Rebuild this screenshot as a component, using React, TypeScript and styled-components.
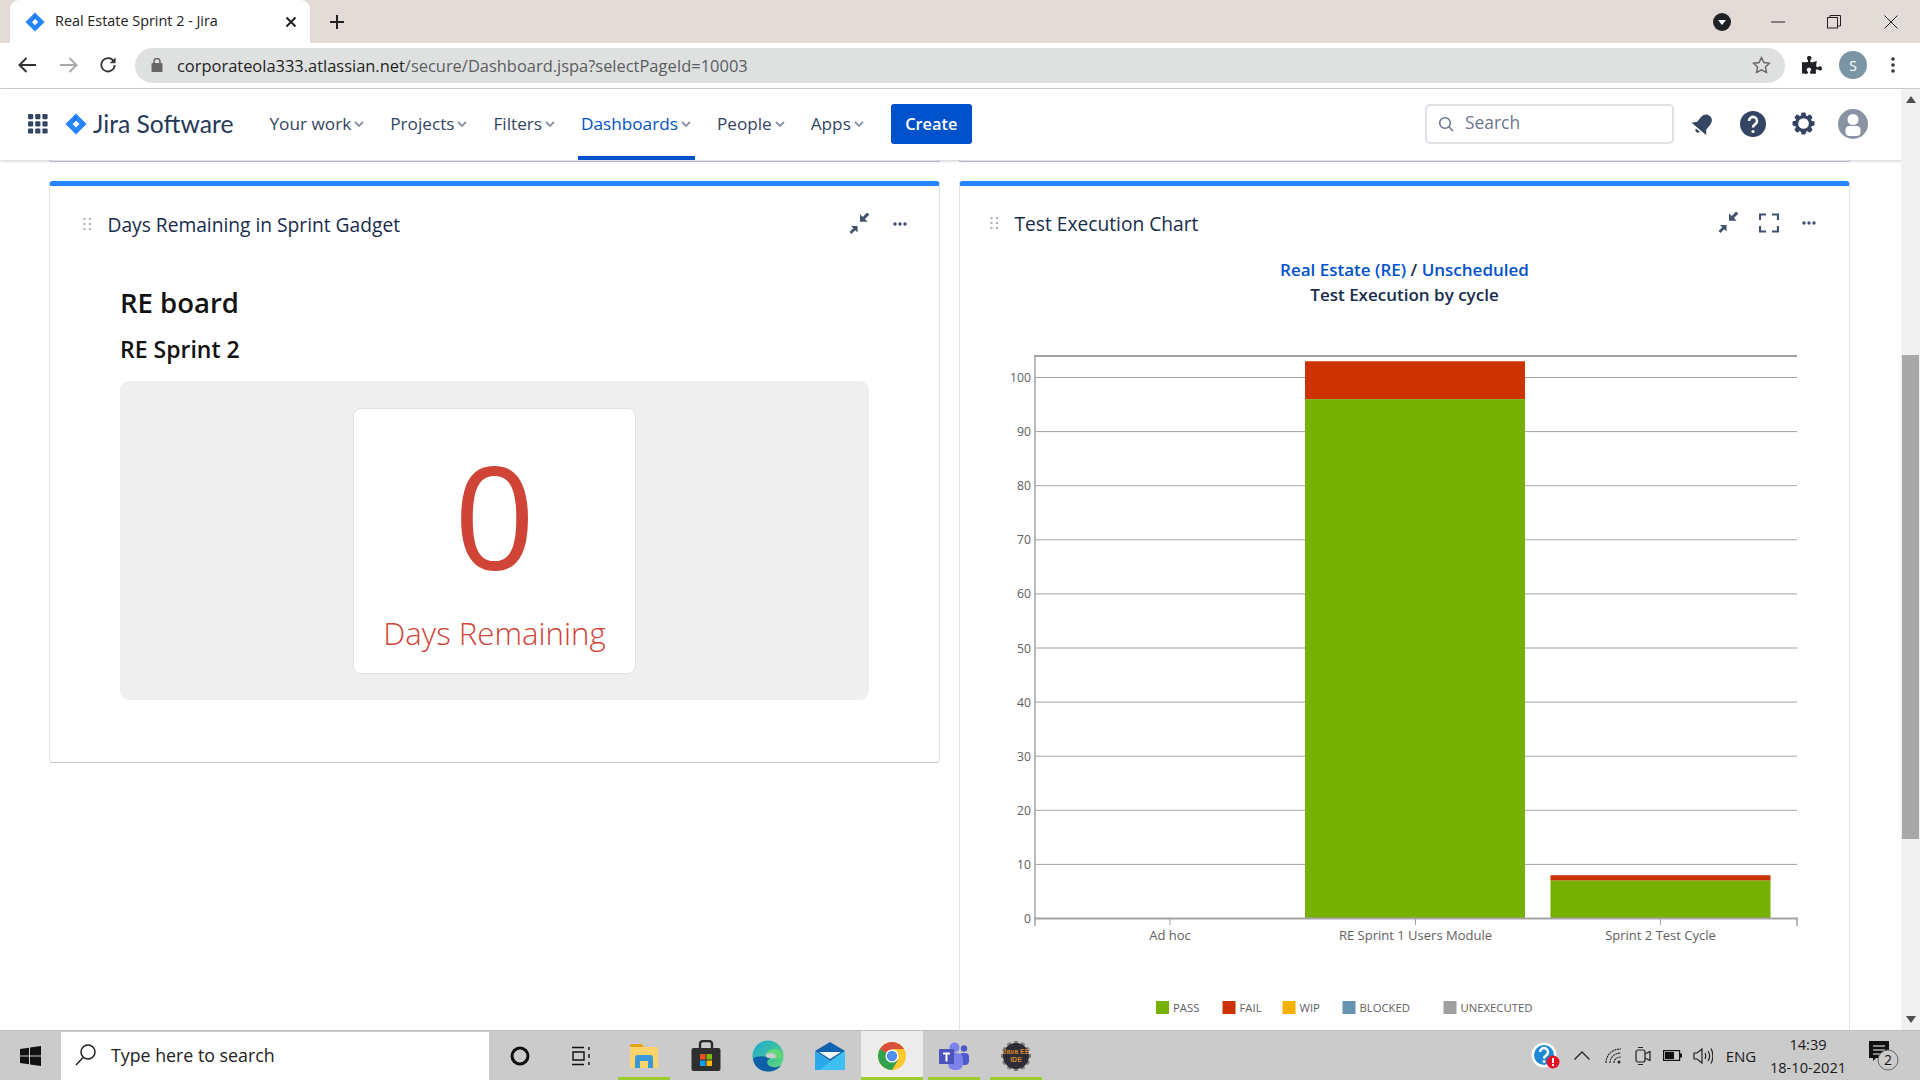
import React from "react";
import styled, { createGlobalStyle } from "styled-components";
import { FaPuzzlePiece } from "react-icons/fa";

const Global = createGlobalStyle`
  html, body {
    margin: 0;
    height: 100%;
    overflow: hidden;
    background: white;
    font-family: "Open Sans", "Noto Sans", sans-serif;
  }
  * { box-sizing: border-box; }
`;

const Screen = styled.div`
  width: 1920px;
  height: 1080px;
  display: flex;
  flex-direction: column;
  overflow: hidden;
`;

/* browser chrome */
const TabStrip = styled.div`
  height: 43px;
  flex: none;
  background: #e3dbd8;
  display: flex;
  align-items: flex-end;
  padding-left: 10px;
`;

const Tab = styled.div`
  width: 300px;
  height: 43px;
  background: white;
  border-radius: 9px 9px 0 0;
  display: flex;
  align-items: center;
  padding: 0 13px 0 15px;
  gap: 10px;
`;

const TabTitle = styled.span`
  flex: 1;
  font-size: 14.4px;
  margin-top: -2px;
  color: #222;
  white-space: nowrap;
`;

const NewTab = styled.div`
  width: 54px;
  height: 43px;
  display: flex;
  align-items: center;
  justify-content: center;
`;

const WindowControls = styled.div`
  margin-left: auto;
  height: 43px;
  display: flex;
  align-items: center;
`;

const WindowButton = styled.div<{ $w: number }>`
  width: ${(p) => p.$w}px;
  display: flex;
  justify-content: center;
`;

const Toolbar = styled.div`
  height: 46px;
  flex: none;
  background: white;
  border-bottom: 1px solid #cfcfcf;
  display: flex;
  align-items: center;
  padding: 0 16px 1px 16px;
`;

const ToolButton = styled.div<{ $w: number }>`
  width: ${(p) => p.$w}px;
  display: flex;
  justify-content: center;
  align-items: center;
  flex: none;
`;

const Omnibox = styled.div`
  flex: none;
  width: 1650px;
  height: 35px;
  margin-left: 19px;
  margin-right: 10px;
  background: #dfe1e1;
  border-radius: 18px;
  display: flex;
  align-items: center;
  padding: 0 14px 0 16px;
`;

const Url = styled.span`
  flex: 1;
  margin-left: 14px;
  font-size: 16.45px;
  color: #5a5c5e;
  b {
    font-weight: 400;
    color: #222;
  }
`;

const Avatar = styled.div`
  width: 28px;
  height: 28px;
  border-radius: 50%;
  background: #7a95a3;
  color: white;
  font-size: 14px;
  display: flex;
  align-items: center;
  justify-content: center;
`;

/* jira nav */
const Nav = styled.header`
  height: 71px;
  flex: none;
  background: white;
  display: flex;
  align-items: center;
  padding: 0 42px 2px 28px;
  position: relative;
  z-index: 2;
  box-shadow: 0 1px 3px rgba(9, 30, 66, 0.22);
`;

const LogoText = styled.span`
  font-family: Lato, sans-serif;
  font-size: 24.7px;
  color: #253858;
  margin-left: 6px;
  margin-right: 33px;
  white-space: nowrap;
`;

const NavList = styled.nav`
  display: flex;
  align-self: stretch;
  margin-bottom: -2px;
  gap: 19px;
`;

const NavItem = styled.div<{ $active?: boolean }>`
  height: 100%;
  display: flex;
  align-items: center;
  gap: 2px;
  padding: 2px 3px 0;
  font-size: 17.2px;
  color: ${(p) => (p.$active ? "#0052cc" : "#344563")};
  border-bottom: 4px solid ${(p) => (p.$active ? "#0052cc" : "transparent")};
  white-space: nowrap;
`;

const CreateButton = styled.button`
  margin-left: 23px;
  width: 81px;
  height: 40px;
  border: none;
  border-radius: 3px;
  background: #0052cc;
  color: white;
  font-family: inherit;
  font-size: 16.4px;
  font-weight: 600;
`;

const SearchBox = styled.div`
  margin-left: auto;
  width: 249px;
  height: 40px;
  border: 2px solid #dfe1e6;
  border-radius: 5px;
  display: flex;
  align-items: center;
  padding: 0 11px;
  gap: 11px;
  font-size: 17.4px;
  color: #6b778c;
`;

const SearchLabel = styled.span`
  margin-top: -3px;
`;

const NavIcons = styled.div`
  display: flex;
  align-items: center;
  margin-left: 4px;
`;

const NavIcon = styled.div`
  width: 50px;
  display: flex;
  justify-content: center;
`;

/* page body */
const Body = styled.div`
  flex: 1;
  min-height: 0;
  display: flex;
`;

const Board = styled.main`
  flex: 1;
  min-width: 0;
  overflow: hidden;
  display: grid;
  grid-template-columns: 891px 891px;
  column-gap: 19px;
  align-items: start;
  padding: 0 51px 0 49px;
`;

const Column = styled.div`
  display: flex;
  flex-direction: column;
`;

const PrevCardEdge = styled.div`
  height: 2px;
  border: 1px solid #c1c7d0;
  border-top: none;
  border-radius: 0 0 3px 3px;
  margin-bottom: 19px;
`;

const Card = styled.section<{ $h: number }>`
  height: ${(p) => p.$h}px;
  background: white;
  border: 1px solid #dfe1e6;
  border-top: 5px solid #2684ff;
  border-bottom-color: #c1c7d0;
  border-radius: 4px;
  display: flex;
  flex-direction: column;
`;

const CardHeader = styled.div<{ $mt: number; $pl: number; $pr: number }>`
  display: flex;
  align-items: center;
  margin-top: ${(p) => p.$mt}px;
  padding: 0 ${(p) => p.$pr}px 0 ${(p) => p.$pl}px;
  height: 28px;
`;

const CardTitle = styled.h2`
  margin: 0 0 0 15.5px;
  flex: 1;
  font-size: 19.2px;
  font-weight: 400;
  color: #172b4d;
  white-space: nowrap;
`;

const HeaderAction = styled.div`
  width: 40px;
  display: flex;
  justify-content: center;
`;

const GadgetBody = styled.div`
  padding: 45px 70px 0 70px;
`;

const BoardName = styled.div`
  font-size: 27.5px;
  line-height: 40px;
  font-weight: 600;
  color: #111;
`;

const SprintName = styled.div`
  font-size: 23px;
  line-height: 32px;
  margin-top: 10px;
  font-weight: 600;
  color: #111;
`;

const DaysPanel = styled.div`
  margin-top: 16px;
  height: 319px;
  background: #efefef;
  border-radius: 9px;
  display: flex;
  justify-content: center;
  align-items: center;
`;

const DaysCard = styled.div`
  width: 283px;
  height: 266px;
  background: white;
  border: 1px solid #e2e2e2;
  border-radius: 8px;
  display: flex;
  flex-direction: column;
  align-items: center;
  color: #cf4436;
`;

const DaysNumber = styled.div`
  font-size: 142px;
  line-height: 170px;
  font-weight: 400;
  margin-top: 21px;
`;

const DaysLabel = styled.div`
  font-size: 31.2px;
  line-height: 40px;
  font-weight: 300;
  margin-top: 13px;
  white-space: nowrap;
`;

const ChartHeading = styled.div`
  margin-top: 20px;
  text-align: center;
  font-size: 17px;
  line-height: 25px;
  font-weight: 600;
  color: #172b4d;
  span {
    color: #0052cc;
  }
`;

const ChartSvg = styled.svg`
  display: block;
  margin-top: 13px;
`;

/* scrollbar */
const Scrollbar = styled.div`
  width: 19px;
  flex: none;
  background: #f1f1f1;
  display: flex;
  flex-direction: column;
  align-items: center;
  justify-content: space-between;
  position: relative;
  padding: 7px 0 7px;
  margin-top: -71px;
  z-index: 3;
`;

const ScrollThumb = styled.div`
  position: absolute;
  left: 1px;
  right: 1px;
  top: 266px;
  height: 484px;
  background: #a8a8a8;
`;

/* windows taskbar */
const Taskbar = styled.footer`
  height: 50px;
  flex: none;
  background: #cbcbcb;
  border-top: 1px solid #c0c0c0;
  display: flex;
  align-items: center;
  position: relative;
  z-index: 4;
`;

const StartButton = styled.div`
  width: 61px;
  display: flex;
  justify-content: center;
`;

const TaskSearch = styled.div`
  width: 428px;
  height: 48px;
  background: white;
  display: flex;
  align-items: center;
  padding: 0 0 2px 14px;
  gap: 15px;
  font-size: 17.8px;
  color: #222;
`;

const TaskSlot = styled.div<{ $active?: boolean; $running?: boolean }>`
  width: 62px;
  height: 49px;
  display: flex;
  align-items: center;
  justify-content: center;
  position: relative;
  background: ${(p) => (p.$active ? "#ececec" : "transparent")};
  &::after {
    content: "";
    display: ${(p) => (p.$running ? "block" : "none")};
    position: absolute;
    bottom: 0;
    left: ${(p) => (p.$active ? 0 : 5)}px;
    right: ${(p) => (p.$active ? 0 : 5)}px;
    height: 3px;
    background: #9ccc2c;
  }
`;

const Tray = styled.div`
  margin-left: auto;
  display: flex;
  align-items: center;
  height: 100%;
  padding-right: 8px;
  color: #1a1a1a;
`;

const TrayIcon = styled.div<{ $w: number }>`
  width: ${(p) => p.$w}px;
  display: flex;
  justify-content: center;
`;

const TrayText = styled.div`
  font-size: 15px;
  width: 46px;
  text-align: center;
`;

const Clock = styled.div`
  width: 88px;
  font-size: 14.6px;
  line-height: 23px;
  text-align: center;
  white-space: nowrap;
`;

const JiraMark = ({ size }: { size: number }) => (
  <svg width={size} height={size} viewBox="0 0 24 24">
    <path
      fillRule="evenodd"
      d="M12 0.5 23.5 12 12 23.5 0.5 12ZM12 8.2 8.2 12 12 15.8 15.8 12Z"
      fill="#2684ff"
    />
    <path d="M12 0.5 8.2 12 12 8.2Z" fill="#1d6fe0" />
  </svg>
);

const AppsGrid = () => (
  <svg width="20" height="20" viewBox="0 0 20 20" fill="#344563">
    {[0, 1, 2].flatMap((r) =>
      [0, 1, 2].map((c) => (
        <rect key={`${r}${c}`} x={c * 7.2} y={r * 7.2} width="5.2" height="5.2" rx="1.2" />
      ))
    )}
  </svg>
);

const Chevron = () => (
  <svg width="12" height="12" viewBox="0 0 12 12" fill="none" stroke="#8993a4" strokeWidth="1.8">
    <path d="M2 4l4 4 4-4" />
  </svg>
);

const DragHandle = () => (
  <svg width="10" height="14" viewBox="0 0 10 14" fill="#a5adba">
    {[1, 6, 11].flatMap((y) => [1.5, 7].map((x) => <rect key={`${x}${y}`} x={x} y={y} width="2" height="2" />))}
  </svg>
);

const CollapseIcon = () => (
  <svg width="24" height="24" viewBox="0 0 22 22" fill="#42526e">
    <path d="M20.5 1.5 16.5 5.5 19 8H12V1L14.5 3.5 18.5 -0.5Z" transform="translate(-1 1)" />
    <path d="M1.5 20.5 5.5 16.5 8 19V12H1L3.5 14.5 -0.5 18.5Z" transform="translate(1 -1) scale(.86) translate(1 4)" />
  </svg>
);

const ExpandIcon = () => (
  <svg width="20" height="20" viewBox="0 0 20 20" fill="none" stroke="#42526e" strokeWidth="2.2">
    <path d="M1 7V1.5H7M13 1.5H19V7M19 13V18.5H13M7 18.5H1V13" />
  </svg>
);

const MoreIcon = () => (
  <svg width="16" height="4" viewBox="0 0 16 4" fill="#42526e">
    <circle cx="3" cy="2" r="1.7" />
    <circle cx="8" cy="2" r="1.7" />
    <circle cx="13" cy="2" r="1.7" />
  </svg>
);

const GearIcon = () => (
  <svg width="23" height="23" viewBox="0 0 24 24">
    {[0, 45, 90, 135].map((a) => (
      <rect key={a} x="9.5" y="0.5" width="5" height="23" rx="1.5" fill="#344563" transform={`rotate(${a} 12 12)`} />
    ))}
    <circle cx="12" cy="12" r="9" fill="#344563" />
    <circle cx="12" cy="12" r="5.6" fill="white" />
  </svg>
);

const levels = [0, 10, 20, 30, 40, 50, 60, 70, 80, 90, 100];
const yOf = (v: number) => 918.5 - v * 5.41;

const bars = [
  { x: 1305, w: 220, pass: 96, total: 103 },
  { x: 1550.5, w: 220, pass: 7, total: 8 },
];

const ticks = [
  { x: 1170, label: "Ad hoc" },
  { x: 1415.5, label: "RE Sprint 1 Users Module" },
  { x: 1660.5, label: "Sprint 2 Test Cycle" },
];

const legend = [
  { x: 1156, color: "#76b000", label: "PASS" },
  { x: 1222.5, color: "#cc3300", label: "FAIL" },
  { x: 1282.5, color: "#f5b000", label: "WIP" },
  { x: 1342.5, color: "#6693b0", label: "BLOCKED" },
  { x: 1443.5, color: "#a0a0a0", label: "UNEXECUTED" },
];

const Chart = () => (
  <ChartSvg width="888" height="720" viewBox="960 320 888 720" fontFamily="'Open Sans', sans-serif">
    {levels.slice(1).map((v) => (
      <line key={v} x1="1035" x2="1797" y1={yOf(v)} y2={yOf(v)} stroke="#a3a3a3" />
    ))}
    <line x1="1034" x2="1797" y1="356" y2="356" stroke="#a3a3a3" strokeWidth="2" />
    <line x1="1035" x2="1035" y1="355" y2="926" stroke="#a3a3a3" strokeWidth="1.5" />
    {bars.map((b) => (
      <g key={b.x}>
        <rect x={b.x} y={yOf(b.total)} width={b.w} height={yOf(b.pass) - yOf(b.total)} fill="#cc3300" />
        <rect x={b.x} y={yOf(b.pass)} width={b.w} height={yOf(0) - yOf(b.pass)} fill="#76b000" />
      </g>
    ))}
    <line x1="1034" x2="1798" y1={yOf(0)} y2={yOf(0)} stroke="#a3a3a3" strokeWidth="2" />
    <line x1="1797" x2="1797" y1="918" y2="926" stroke="#a3a3a3" strokeWidth="1.5" />
    {levels.map((v) => (
      <text key={v} x="1031" y={yOf(v) + 4.5} textAnchor="end" fontSize="12.2" fill="#606060">
        {v}
      </text>
    ))}
    {ticks.map((t) => (
      <g key={t.x}>
        <line x1={t.x} x2={t.x} y1="919" y2="925" stroke="#a3a3a3" />
        <text x={t.x} y="940" textAnchor="middle" fontSize="13" fill="#606060">
          {t.label}
        </text>
      </g>
    ))}
    {legend.map((l) => (
      <g key={l.label}>
        <rect x={l.x} y="1001" width="13" height="13" fill={l.color} />
        <text x={l.x + 17} y="1012" fontSize="11.3" fill="#606060">
          {l.label}
        </text>
      </g>
    ))}
  </ChartSvg>
);

const FolderIcon = () => (
  <svg width="28" height="26" viewBox="0 0 28 26">
    <path d="M0 3a2 2 0 0 1 2-2h10l2 3H0Z" fill="#e5a414" />
    <rect x="0" y="4" width="28" height="21" rx="1" fill="#fbd36a" />
    <path d="M5 25V15a3 3 0 0 1 3-3h12a3 3 0 0 1 3 3v10h-5v-7h-8v7Z" fill="#3a9ad9" />
  </svg>
);

const StoreIcon = () => (
  <svg width="30" height="32" viewBox="0 0 30 32">
    <path d="M9 9V4a3 3 0 0 1 3-3h6a3 3 0 0 1 3 3v5" fill="none" stroke="#2b2b2b" strokeWidth="2.4" />
    <rect x="0.5" y="8" width="29" height="23" rx="2" fill="#2f2f2f" />
    <rect x="9" y="14" width="5.5" height="5.5" fill="#f25022" />
    <rect x="15.5" y="14" width="5.5" height="5.5" fill="#7fba00" />
    <rect x="9" y="20.5" width="5.5" height="5.5" fill="#00a4ef" />
    <rect x="15.5" y="20.5" width="5.5" height="5.5" fill="#ffb900" />
  </svg>
);

const EdgeIcon = () => (
  <svg width="32" height="32" viewBox="0 0 32 32">
    <defs>
      <linearGradient id="edgeTop" x1="0" y1="0" x2="1" y2="1">
        <stop offset="0" stopColor="#1aa7d8" />
        <stop offset="1" stopColor="#62dc6c" />
      </linearGradient>
    </defs>
    <circle cx="16" cy="16" r="15.5" fill="url(#edgeTop)" />
    <path d="M1 17C1 26 8 31.5 16 31.5c5 0 10-2 13-6-5 3-11 2-13-1-2-3 0-5 2-6-5-3-13-3-17 0Z" fill="#0f5fa8" />
    <path d="M18 18c3 1 9 1 13-1 0-4-3-8-8-8-6 0-9 4-8 6 .5 1 2 2 3 3Z" fill="#5fd77a" />
    <path d="M14 14c4-2 9-1 10 2 1 2-3 2.500-6 2-2 .5-5-1-4-4Z" fill="#cbcbcb" />
  </svg>
);

const MailIcon = () => (
  <svg width="30" height="28" viewBox="0 0 30 28">
    <path d="M0 9 15 0 30 9 15 19Z" fill="#0f62ad" />
    <path d="M4 10H26L15 17Z" fill="#eef4f8" />
    <path d="M0 9 15 19 30 9V28H0Z" fill="#2aa8ea" />
    <path d="M30 9V28H4Z" fill="#3fc0f2" />
  </svg>
);

const ChromeIcon = ({ size }: { size: number }) => (
  <svg width={size} height={size} viewBox="0 0 28 28">
    <circle cx="14" cy="14" r="14" fill="#fbc82e" />
    <path d="M14 14 1.9 7A14 14 0 0 1 26.100 7H14Z" fill="#db4d3f" />
    <path d="M14 14 1.900 7A14 14 0 0 0 14 28l6-10Z" fill="#2fa14f" />
    <circle cx="14" cy="14" r="6.6" fill="white" />
    <circle cx="14" cy="14" r="5.2" fill="#4f8ff0" />
  </svg>
);

const TeamsIcon = () => (
  <svg width="30" height="28" viewBox="0 0 30 28">
    <circle cx="25" cy="6.500" r="3.200" fill="#5059c9" />
    <rect x="20" y="11" width="10" height="12" rx="4" fill="#5059c9" />
    <circle cx="15.500" cy="5.500" r="5" fill="#7b83eb" />
    <rect x="9" y="11" width="15" height="17" rx="6" fill="#7b83eb" />
    <rect x="0" y="7" width="15" height="15" rx="1" fill="#4b53bc" />
    <path d="M4 10.500h7v2H8.500v7h-2v-7H4Z" fill="white" />
  </svg>
);

const JavaIdeIcon = () => (
  <svg width="30" height="30" viewBox="0 0 30 30">
    {[0, 30, 60, 90, 120, 150].map((a) => (
      <rect key={a} x="13" y="0" width="4" height="30" fill="#7d7d7d" transform={`rotate(${a} 15 15)`} />
    ))}
    <circle cx="15" cy="15" r="13" fill="#2d2d38" />
    <text x="15" y="13" textAnchor="middle" fontSize="7" fontWeight="700" fill="#d9822b" fontFamily="'Liberation Sans', sans-serif">
      Java EE
    </text>
    <text x="15" y="21" textAnchor="middle" fontSize="7" fontWeight="700" fill="#d9822b" fontFamily="'Liberation Sans', sans-serif">
      IDE
    </text>
  </svg>
);

export default function App() {
  return (
    <Screen>
      <Global />
      <TabStrip>
        <Tab>
          <JiraMark size={20} />
          <TabTitle>Real Estate Sprint 2 - Jira</TabTitle>
          <svg width="12" height="12" viewBox="0 0 12 12" stroke="#222" strokeWidth="2">
            <path d="M1.500 1.500l9 9M10.500 1.500l-9 9" />
          </svg>
        </Tab>
        <NewTab>
          <svg width="14" height="14" viewBox="0 0 14 14" stroke="#222" strokeWidth="2">
            <path d="M7 0v14M0 7h14" />
          </svg>
        </NewTab>
        <WindowControls>
          <WindowButton $w={57}>
            <svg width="18" height="18" viewBox="0 0 18 18">
              <circle cx="9" cy="9" r="9" fill="#202124" />
              <path d="M5 7h8l-4 5Z" fill="white" />
            </svg>
          </WindowButton>
          <WindowButton $w={56}>
            <svg width="14" height="2" viewBox="0 0 14 2">
              <rect width="14" height="1" y="0.500" fill="#222" />
            </svg>
          </WindowButton>
          <WindowButton $w={56}>
            <svg width="14" height="14" viewBox="0 0 14 14" fill="none" stroke="#222">
              <rect x="0.500" y="2.500" width="10" height="10.500" />
              <path d="M3 2.500V0.500H13.500V11H10.500" />
            </svg>
          </WindowButton>
          <WindowButton $w={58}>
            <svg width="14" height="14" viewBox="0 0 14 14" stroke="#222" strokeWidth="1">
              <path d="M0.500 0.500l13 13M13.500 0.500l-13 13" />
            </svg>
          </WindowButton>
        </WindowControls>
      </TabStrip>
      <Toolbar>
        <ToolButton $w={22}>
          <svg width="18" height="16" viewBox="0 0 18 16" fill="none" stroke="#333" strokeWidth="2">
            <path d="M18 8H2M8.500 1 1.500 8l7 7" />
          </svg>
        </ToolButton>
        <ToolButton $w={62}>
          <svg width="18" height="16" viewBox="0 0 18 16" fill="none" stroke="#a8a8a8" strokeWidth="2">
            <path d="M0 8H16M9.500 1l7 7-7 7" />
          </svg>
        </ToolButton>
        <ToolButton $w={16}>
          <svg width="18" height="18" viewBox="0 0 18 18" fill="none" stroke="#333" strokeWidth="2">
            <path d="M15.500 5A7.500 7.500 0 1 0 16.500 9" />
            <path d="M17 1v5.500h-5.500" fill="#333" strokeWidth="1" />
          </svg>
        </ToolButton>
        <Omnibox>
          <svg width="12" height="14" viewBox="0 0 12 14" fill="#666">
            <rect x="0.500" y="5" width="11" height="9" rx="1" />
            <path d="M3 5V3.500a3 3 0 0 1 6 0V5" fill="none" stroke="#666" strokeWidth="1.500" />
          </svg>
          <Url>
            <b>corporateola333.atlassian.net</b>/secure/Dashboard.jspa?selectPageId=10003
          </Url>
          <svg width="19" height="18" viewBox="0 0 19 18" fill="none" stroke="#666" strokeWidth="1.400">
            <path d="M9.500 1.500l2.400 5 5.500.7-4 3.800 1 5.500-4.900-2.700-4.900 2.700 1-5.500-4-3.800 5.500-.7Z" />
          </svg>
        </Omnibox>
        <ToolButton $w={34}>
          <FaPuzzlePiece size={20} color="#202124" />
        </ToolButton>
        <ToolButton $w={48}>
          <Avatar>S</Avatar>
        </ToolButton>
        <ToolButton $w={32}>
          <svg width="4" height="16" viewBox="0 0 4 16" fill="#333">
            <circle cx="2" cy="2" r="1.800" />
            <circle cx="2" cy="8" r="1.800" />
            <circle cx="2" cy="14" r="1.800" />
          </svg>
        </ToolButton>
      </Toolbar>
      <Nav>
        <AppsGrid />
        <svg width="17" height="1" />
        <JiraMark size={22} />
        <LogoText>Jira Software</LogoText>
        <NavList>
          <NavItem>
            Your work <Chevron />
          </NavItem>
          <NavItem>
            Projects <Chevron />
          </NavItem>
          <NavItem>
            Filters <Chevron />
          </NavItem>
          <NavItem $active>
            Dashboards <Chevron />
          </NavItem>
          <NavItem>
            People <Chevron />
          </NavItem>
          <NavItem>
            Apps <Chevron />
          </NavItem>
        </NavList>
        <CreateButton>Create</CreateButton>
        <SearchBox>
          <svg width="16" height="16" viewBox="0 0 16 16" fill="none" stroke="#6b778c" strokeWidth="1.600">
            <circle cx="7" cy="7" r="5.300" />
            <path d="M11 11l4 4" />
          </svg>
          <SearchLabel>Search</SearchLabel>
        </SearchBox>
        <NavIcons>
          <NavIcon>
            <svg width="24" height="24" viewBox="0 0 24 24" fill="#344563">
              <g transform="rotate(40 12 12)">
                <path d="M12 1.500c-4 0-6 3-6 7v5.500L2.500 18.500h19L18 14V8.500c0-4-2-7-6-7Z" />
                <path d="M9.500 20h5a2.500 2.500 0 0 1-5 0Z" />
              </g>
            </svg>
          </NavIcon>
          <NavIcon>
            <svg width="26" height="26" viewBox="0 0 26 26">
              <circle cx="13" cy="13" r="13" fill="#344563" />
              <path d="M9 10a4 4 0 1 1 6.500 3c-1.500 1.200-2.500 1.500-2.500 3.500" fill="none" stroke="white" strokeWidth="2.600" />
              <circle cx="13" cy="20.500" r="1.600" fill="white" />
            </svg>
          </NavIcon>
          <NavIcon>
            <GearIcon />
          </NavIcon>
          <NavIcon>
            <svg width="30" height="30" viewBox="0 0 30 30">
              <circle cx="15" cy="15" r="15" fill="#8993a4" />
              <circle cx="15" cy="10.500" r="5.500" fill="white" />
              <rect x="7.500" y="17" width="15" height="10" rx="4" fill="white" />
            </svg>
          </NavIcon>
        </NavIcons>
      </Nav>
      <Body>
        <Board>
          <Column>
            <PrevCardEdge />
            <Card $h={582}>
              <CardHeader $mt={24} $pl={32} $pr={19}>
                <DragHandle />
                <CardTitle>Days Remaining in Sprint Gadget</CardTitle>
                <HeaderAction>
                  <CollapseIcon />
                </HeaderAction>
                <HeaderAction>
                  <MoreIcon />
                </HeaderAction>
              </CardHeader>
              <GadgetBody>
                <BoardName>RE board</BoardName>
                <SprintName>RE Sprint 2</SprintName>
                <DaysPanel>
                  <DaysCard>
                    <DaysNumber>0</DaysNumber>
                    <DaysLabel>Days Remaining</DaysLabel>
                  </DaysCard>
                </DaysPanel>
              </GadgetBody>
            </Card>
          </Column>
          <Column>
            <PrevCardEdge />
            <Card $h={900}>
              <CardHeader $mt={23} $pl={29} $pr={20}>
                <DragHandle />
                <CardTitle>Test Execution Chart</CardTitle>
                <HeaderAction>
                  <CollapseIcon />
                </HeaderAction>
                <HeaderAction>
                  <ExpandIcon />
                </HeaderAction>
                <HeaderAction>
                  <MoreIcon />
                </HeaderAction>
              </CardHeader>
              <ChartHeading>
                <div>
                  <span>Real Estate (RE)</span> / <span>Unscheduled</span>
                </div>
                <div>Test Execution by cycle</div>
              </ChartHeading>
              <Chart />
            </Card>
          </Column>
        </Board>
        <Scrollbar>
          <svg width="10" height="7" viewBox="0 0 10 7">
            <path d="M5 0l5 7H0Z" fill="#505050" />
          </svg>
          <ScrollThumb />
          <svg width="10" height="7" viewBox="0 0 10 7">
            <path d="M5 7l5-7H0Z" fill="#505050" />
          </svg>
        </Scrollbar>
      </Body>
      <Taskbar>
        <StartButton>
          <svg width="21" height="20" viewBox="0 0 21 20" fill="#111">
            <path d="M0 3 9 1.700V9.500H0ZM10 1.500 21 0V9.500H10ZM0 10.500H9V18.300L0 17ZM10 10.500H21V20L10 18.500Z" />
          </svg>
        </StartButton>
        <TaskSearch>
          <svg width="21" height="22" viewBox="0 0 21 22" fill="none" stroke="#222" strokeWidth="1.500">
            <circle cx="13" cy="8" r="7" />
            <path d="M8 13.500 1 21" />
          </svg>
          Type here to search
        </TaskSearch>
        <TaskSlot>
          <svg width="20" height="20" viewBox="0 0 20 20" fill="none" stroke="#111" strokeWidth="3">
            <circle cx="10" cy="10" r="8" />
          </svg>
        </TaskSlot>
        <TaskSlot>
          <svg width="20" height="20" viewBox="0 0 20 20" fill="none" stroke="#111" strokeWidth="1.400">
            <path d="M0 1.500H12M0 18.500H12M1 6H12V14H1ZM17 1v3M17 8v4M17 16v3" />
          </svg>
        </TaskSlot>
        <TaskSlot $running>
          <FolderIcon />
        </TaskSlot>
        <TaskSlot>
          <StoreIcon />
        </TaskSlot>
        <TaskSlot>
          <EdgeIcon />
        </TaskSlot>
        <TaskSlot>
          <MailIcon />
        </TaskSlot>
        <TaskSlot $active $running>
          <ChromeIcon size={28} />
        </TaskSlot>
        <TaskSlot $running>
          <TeamsIcon />
        </TaskSlot>
        <TaskSlot $running>
          <JavaIdeIcon />
        </TaskSlot>
        <Tray>
          <TrayIcon $w={40}>
            <svg width="30" height="28" viewBox="0 0 30 28">
              <circle cx="13" cy="13" r="12.500" fill="white" />
              <circle cx="13" cy="13" r="10" fill="#1c8ad6" />
              <path d="M9 10a4 4 0 1 1 6 3.500c-1.500 1-2 1.500-2 3" fill="none" stroke="white" strokeWidth="2.500" />
              <circle cx="13" cy="19.500" r="1.500" fill="white" />
              <circle cx="22" cy="20" r="6.500" fill="#e81123" />
              <rect x="21" y="16" width="2" height="5" fill="white" />
              <rect x="21" y="22" width="2" height="2" fill="white" />
            </svg>
          </TrayIcon>
          <TrayIcon $w={32}>
            <svg width="16" height="9" viewBox="0 0 16 9" fill="none" stroke="#222" strokeWidth="1.300">
              <path d="M0.500 8.500 8 1l7.500 7.500" />
            </svg>
          </TrayIcon>
          <TrayIcon $w={30}>
            <svg width="17" height="16" viewBox="0 0 17 16" fill="none" stroke="#222" strokeWidth="1.100">
              <path d="M1 15C1 7 7 1 16 1M5 15C5 10 9 5 16 5M9 15c0-3 2-6 7-6" strokeDasharray="2 .7" />
              <circle cx="14" cy="14" r="1.500" fill="#222" stroke="none" />
            </svg>
          </TrayIcon>
          <TrayIcon $w={30}>
            <svg width="16" height="20" viewBox="0 0 16 20" fill="none" stroke="#222" strokeWidth="1.200">
              <rect x="1" y="4" width="9" height="12" rx="2" />
              <path d="M10 8l5-2.500v9L10 12M3 1.500h5M3 18.500h5" />
            </svg>
          </TrayIcon>
          <TrayIcon $w={29}>
            <svg width="19" height="11" viewBox="0 0 19 11">
              <rect x="0.600" y="0.600" width="16" height="9.800" fill="none" stroke="#111" strokeWidth="1.200" />
              <rect x="2" y="2" width="9" height="7" fill="#111" />
              <rect x="17" y="3.500" width="2" height="4" fill="#111" />
            </svg>
          </TrayIcon>
          <TrayIcon $w={31}>
            <svg width="20" height="18" viewBox="0 0 20 18" fill="none" stroke="#222" strokeWidth="1.200">
              <path d="M1 6H4L9 2V16L4 12H1ZM12 6c1 2 1 4 0 6M15 4c2 3 2 7 0 10M18 1.500c2.500 5 2.500 10 0 15" />
            </svg>
          </TrayIcon>
          <TrayText>ENG</TrayText>
          <Clock>
            <div>14:39</div>
            <div>18-10-2021</div>
          </Clock>
          <TrayIcon $w={60}>
            <svg width="34" height="32" viewBox="0 0 34 32">
              <path d="M4 1H24V18H11L8 21V18H4Z" fill="#111" />
              <path d="M8 6H20M8 10H20M8 14H16" stroke="white" strokeWidth="1" />
              <circle cx="23" cy="20" r="10" fill="#cbcbcb" stroke="#666" />
              <text x="23" y="25" textAnchor="middle" fontSize="14" fontFamily="'Open Sans', sans-serif" fill="#111">
                2
              </text>
            </svg>
          </TrayIcon>
        </Tray>
      </Taskbar>
    </Screen>
  );
}
